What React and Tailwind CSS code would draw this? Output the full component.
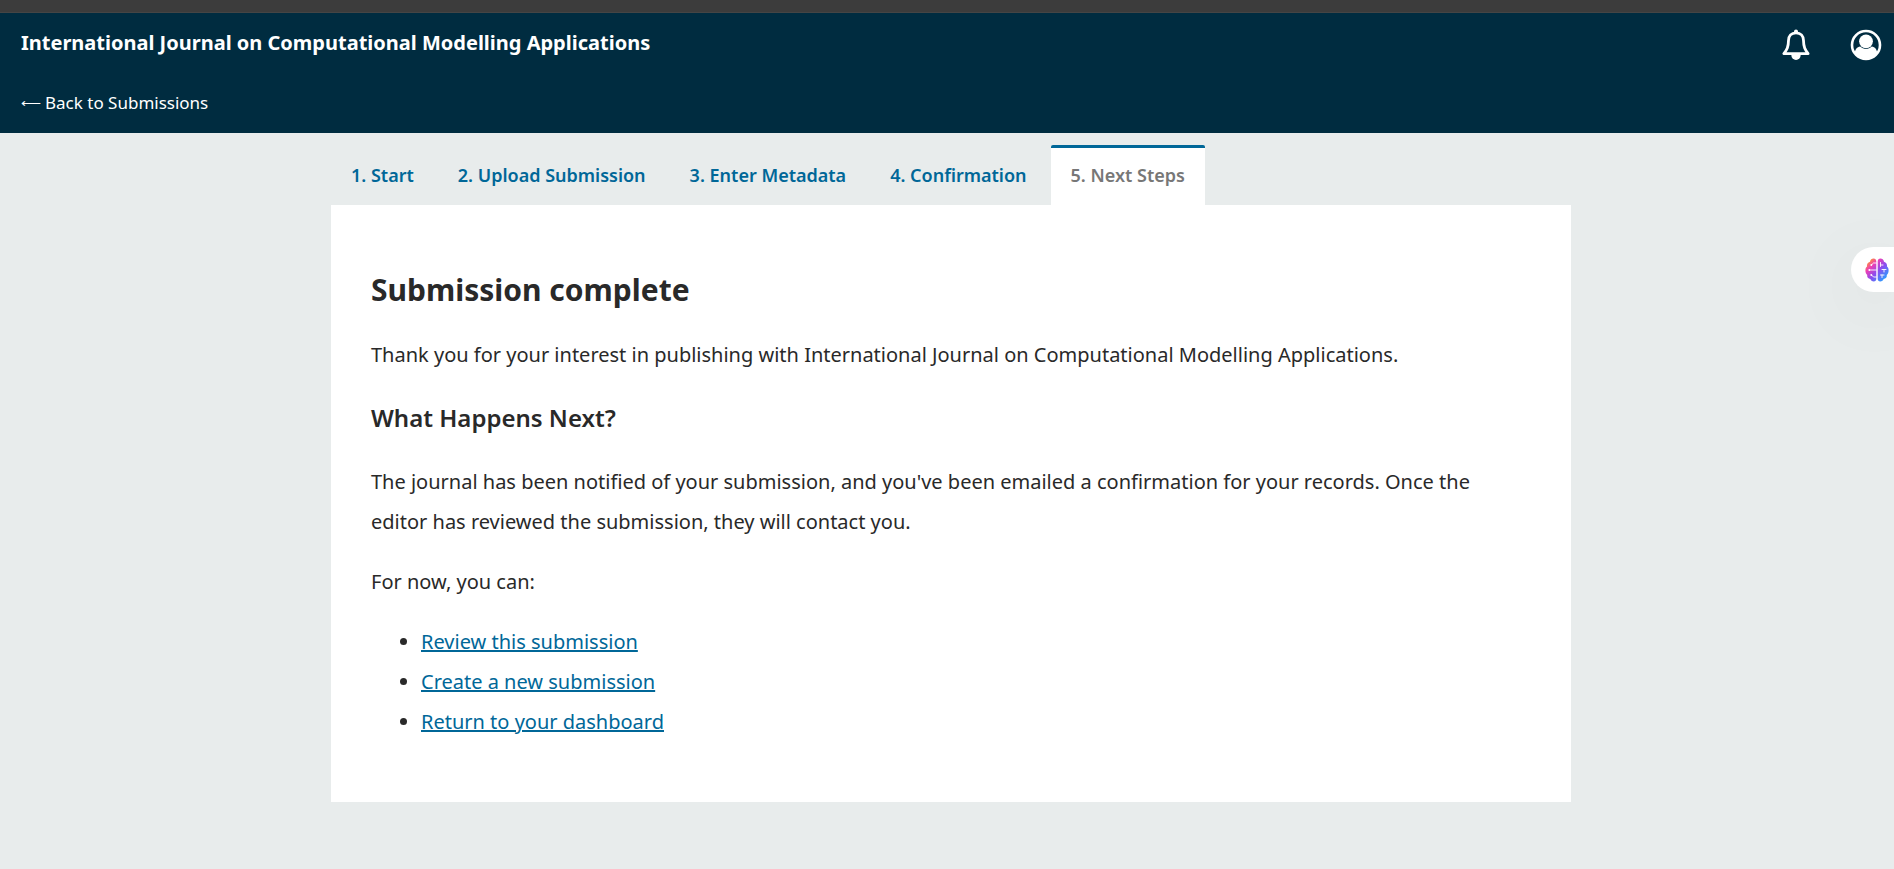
const steps = [
  "1. Start",
  "2. Upload Submission",
  "3. Enter Metadata",
  "4. Confirmation",
  "5. Next Steps",
];

const actions = [
  "Review this submission",
  "Create a new submission",
  "Return to your dashboard",
];

function BellIcon() {
  return (
    <svg viewBox="0 0 28 32" className="h-8 w-7" fill="none" aria-hidden="true">
      <path d="M14 0.6a2 2 0 0 1 2 2V4h-4V2.600A2 2 0 0 1 14 0.600z" fill="white" />
      <path
        d="M14 3.900C9.200 3.900 6.600 7 6.500 11.500C6.400 18 5 20.500 1.900 24.700H26.100C23 20.500 21.600 18 21.500 11.500C21.400 7 18.800 3.900 14 3.900z"
        stroke="white"
        strokeWidth="2.800"
        strokeLinejoin="round"
      />
      <path d="M9.300 26H18.700A4.700 5 0 0 1 9.300 26z" fill="white" />
    </svg>
  );
}

function UserIcon() {
  return (
    <svg viewBox="0 0 32 32" className="size-8" aria-hidden="true">
      <circle cx="16" cy="16" r="14" fill="none" stroke="white" strokeWidth="2.600" />
      <path d="M4.500 24.500C5.200 20.500 7 17.900 10.200 17.600C13.600 20.800 18.400 20.800 21.800 17.600C25 17.900 26.800 20.500 27.500 24.500A14.500 14.500 0 0 1 4.500 24.500z" fill="white" />
      <circle cx="16" cy="12.300" r="6.900" fill="white" />
    </svg>
  );
}

function BrainIcon() {
  return (
    <svg viewBox="0 0 24 24" className="size-6" aria-hidden="true">
      <defs>
        <linearGradient id="brain-fill" x1="0" y1="0" x2="1" y2="1">
          <stop offset="0.100" stopColor="#ff9a2e" />
          <stop offset="0.300" stopColor="#ee3fb4" />
          <stop offset="0.550" stopColor="#8b4df0" />
          <stop offset="0.900" stopColor="#25a4ff" />
        </linearGradient>
      </defs>
      <path
        d="M11.300 3.500V21C11.300 22.600 10.200 23.400 8.800 23.400C7 23.400 5.800 22.600 5.400 21C3.200 20.800 1.800 19.200 2.200 17C0.900 16 0.400 14.600 0.400 12.300C0.400 10.600 0.900 9.500 2 8.600C1.600 6.200 2.800 4.300 5 3.700C5.400 1.600 6.800 0.600 8.600 0.600C10.200 0.600 11.300 1.800 11.300 3.500z M12.700 3.500V21C12.700 22.600 13.800 23.400 15.200 23.400C17 23.400 18.200 22.600 18.600 21C20.800 20.800 22.200 19.200 21.800 17C23.100 16 23.600 14.600 23.600 12.300C23.600 10.600 23.100 9.500 22 8.600C22.400 6.200 21.200 4.300 19 3.700C18.600 1.600 17.200 0.600 15.400 0.600C13.800 0.600 12.700 1.800 12.700 3.500z"
        fill="url(#brain-fill)"
      />
      <g fill="none" stroke="white" strokeWidth="0.900" strokeLinecap="round">
        <path d="M11.300 5H8.500L6.500 7M11.300 12H4.500M11.300 19H8.500L6.500 17" />
        <path d="M15.500 4.500V7H18M15.500 7V8.500M17 11.500H21M19 11.500V14M15.500 17H19M17 17V19.500" />
      </g>
      <g fill="white">
        <circle cx="6.300" cy="7" r="0.900" />
        <circle cx="4.300" cy="12" r="0.900" />
        <circle cx="6.300" cy="17" r="0.900" />
      </g>
    </svg>
  );
}

export default function App() {
  return (
    <div className="relative flex min-h-screen flex-col overflow-hidden bg-[#e8ecec] font-['Noto_Sans',sans-serif] text-[#292929]">
      <div className="h-[13px] border-b border-[#454545] bg-[#3c3c3c]" />
      <header className="flex h-[120px] flex-col bg-[#002c40] text-white">
        <div className="flex h-15 items-center justify-between pl-[21px] pr-3">
          <a href="#journal" className="text-xl font-bold">
            International Journal on Computational Modelling Applications
          </a>
          <div className="flex items-center gap-10 pt-1">
            <button type="button" aria-label="Notifications">
              <BellIcon />
            </button>
            <button type="button" aria-label="User menu">
              <UserIcon />
            </button>
          </div>
        </div>
        <div className="flex h-15 items-center pl-[21px]">
          <a href="#submissions" className="flex items-center gap-1 text-[17px]">
            <span className="text-sm">⟵</span>
            Back to Submissions
          </a>
        </div>
      </header>

      <main className="pl-2 pt-3">
        <div className="mx-auto max-w-[1240px]">
          <div role="tablist" aria-label="Submission steps" className="flex gap-1">
            {steps.map((step, i) => {
              const active = i === steps.length - 1;
              return (
                <button
                  key={step}
                  type="button"
                  role="tab"
                  aria-selected={active}
                  className={
                    active
                      ? "h-15 rounded-t-xs border-t-3 border-[#006798] bg-white px-5 pb-1 text-lg font-semibold text-[#777777]"
                      : "h-15 border-t-3 border-transparent px-5 pb-1 text-lg font-semibold text-[#006798]"
                  }
                >
                  {step}
                </button>
              );
            })}
          </div>

          <section className="bg-white px-10 pb-15 pt-[65px] text-xl/10">
            <h1 className="text-3xl/10 font-bold">Submission complete</h1>
            <p className="mt-[25px]">
              Thank you for your interest in publishing with International Journal on Computational
              Modelling Applications.
            </p>
            <h2 className="mb-7 mt-[27px] text-2xl font-semibold">What Happens Next?</h2>
            <p>
              The journal has been notified of your submission, and you've been emailed a
              confirmation for your records. Once the editor has reviewed the submission, they will
              contact you.
            </p>
            <p className="mt-5">For now, you can:</p>
            <ul className="mt-5 list-disc pl-[50px]">
              {actions.map((action) => (
                <li key={action}>
                  <a href="#next" className="text-[#006798] underline">
                    {action}
                  </a>
                </li>
              ))}
            </ul>
          </section>
        </div>
      </main>

      <button
        type="button"
        aria-label="Open assistant"
        className="absolute right-0 top-[247px] flex h-[45px] w-[43px] items-center rounded-l-full bg-white pl-3.5 shadow-[0_16px_80px_rgba(0,0,0,0.08)]"
      >
        <BrainIcon />
      </button>
    </div>
  );
}
